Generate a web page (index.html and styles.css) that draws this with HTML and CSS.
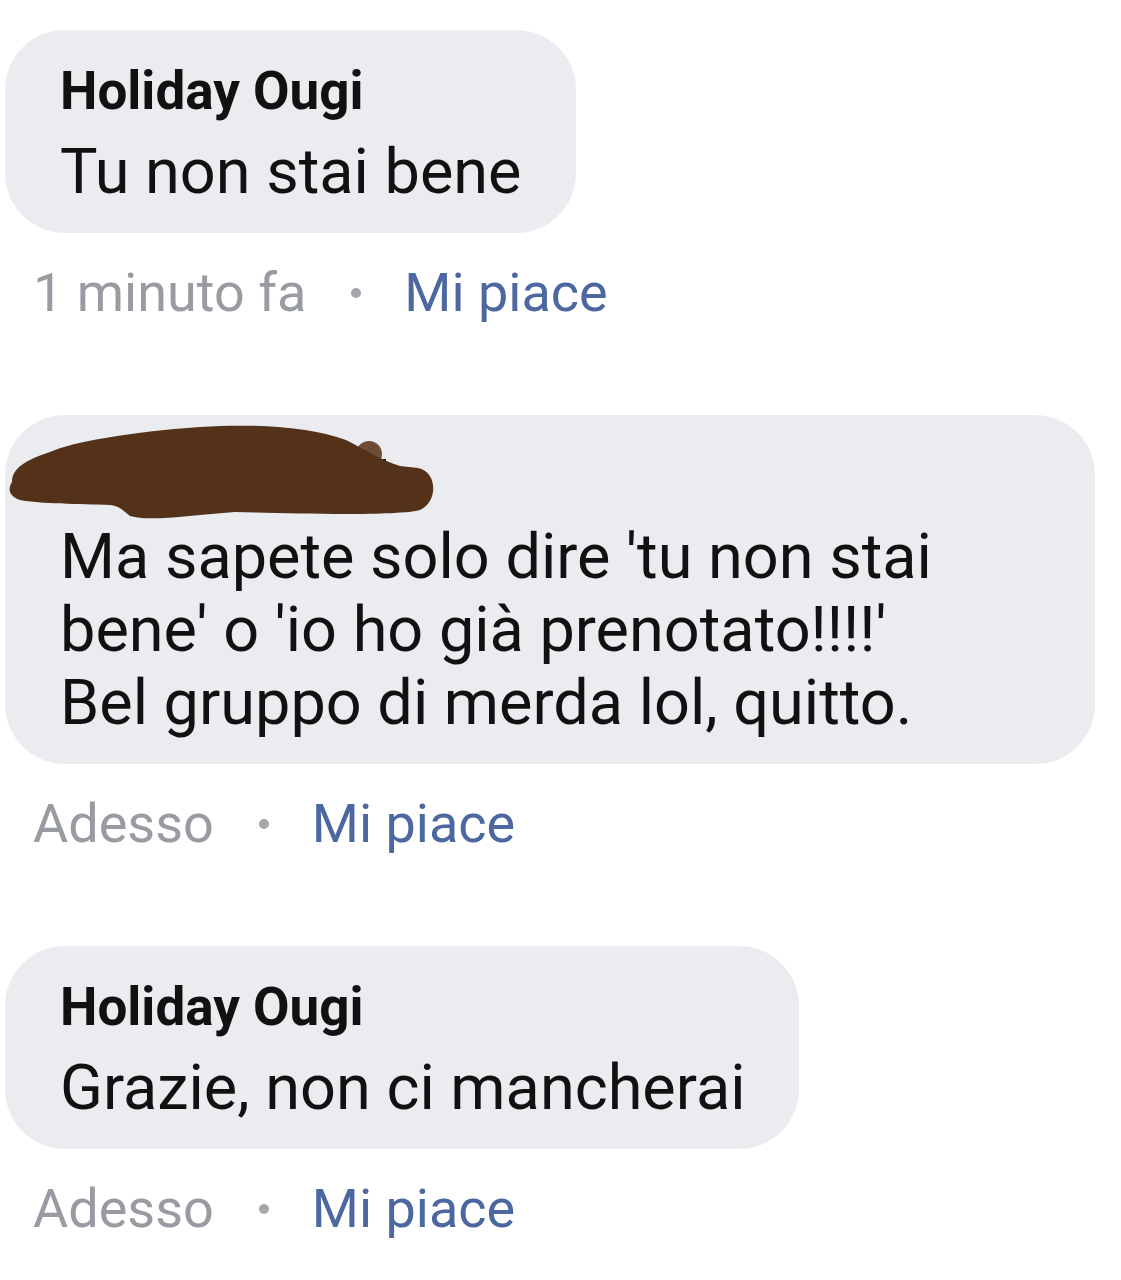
FILE: index.html
```html
<!DOCTYPE html>
<html lang="it">
<head>
<meta charset="utf-8">
<title>Commenti</title>
<link rel="stylesheet" href="styles.css">
</head>
<body>
<div class="thread">
  <div class="comment">
    <div class="bubble">
      <div class="name">Holiday Ougi</div>
      <div class="text">Tu non stai bene</div>
    </div>
    <div class="meta">
      <span class="time">1 minuto fa</span>
      <span class="dot"></span>
      <span class="like">Mi piace</span>
    </div>
  </div>

  <div class="comment">
    <div class="bubble bubble-wide">
      <div class="name name-hidden">
        <svg class="scribble" viewBox="8 420 428 104" width="428" height="104" aria-hidden="true">
          <circle cx="369" cy="454" r="13" fill="#6e4d36"/>
          <rect x="382" y="459" width="4" height="12" fill="#111"/>
          <path fill="#54321a" d="M 12 482 C 12 468 26 460 50 452 C 72 442 130 432 200 427 C 262 423 312 428 346 440 C 366 450 380 460 400 466 L 418 468 C 438 472 438 502 420 510 C 400 516 300 514 235 512 C 190 515 150 522 130 516 C 122 510 120 506 110 505 C 80 504 40 504 20 500 C 8 496 8 488 12 482 Z"/>
        </svg>
      </div>
      <div class="text">Ma sapete solo dire 'tu non stai bene' o 'io ho già prenotato!!!!'<br>Bel gruppo di merda lol, quitto.</div>
    </div>
    <div class="meta">
      <span class="time">Adesso</span>
      <span class="dot"></span>
      <span class="like">Mi piace</span>
    </div>
  </div>

  <div class="comment">
    <div class="bubble">
      <div class="name">Holiday Ougi</div>
      <div class="text">Grazie, non ci mancherai</div>
    </div>
    <div class="meta">
      <span class="time">Adesso</span>
      <span class="dot"></span>
      <span class="like">Mi piace</span>
    </div>
  </div>
</div>
</body>
</html>
```

FILE: styles.css
```css
html, body {
  margin: 0;
  padding: 0;
  background: #ffffff;
}

body {
  font-family: Roboto, "Noto Sans", "Liberation Sans", sans-serif;
  color: #111111;
}

.thread {
  display: flex;
  flex-direction: column;
  gap: 90px;
  padding: 30px 0 0 5px;
}

.comment {
  display: flex;
  flex-direction: column;
  align-items: flex-start;
}

.bubble {
  position: relative;
  max-width: 1090px;
  box-sizing: border-box;
  padding: 30px 54px 25px 55px;
  background: #ebecf0;
  border-radius: 60px;
}

.bubble-wide {
  width: 1090px;
}

.name {
  font-size: 53px;
  font-weight: 700;
  line-height: 62px;
  height: 62px;
  margin-bottom: 13px;
  color: #111111;
}

.name-hidden {
  position: relative;
}

.scribble {
  position: absolute;
  left: -52px;
  top: -25px;
}

.text {
  font-size: 63px;
  line-height: 73px;
  color: #111111;
}

.meta {
  display: flex;
  align-items: center;
  margin: 28px 0 0 28px;
  font-size: 54px;
  line-height: 64px;
}

.time {
  color: #989ba1;
}

.dot {
  width: 10px;
  height: 10px;
  border-radius: 50%;
  background: #a4a7ac;
  margin: 0 43px 0 45px;
}

.like {
  color: #4d68a0;
}
```
